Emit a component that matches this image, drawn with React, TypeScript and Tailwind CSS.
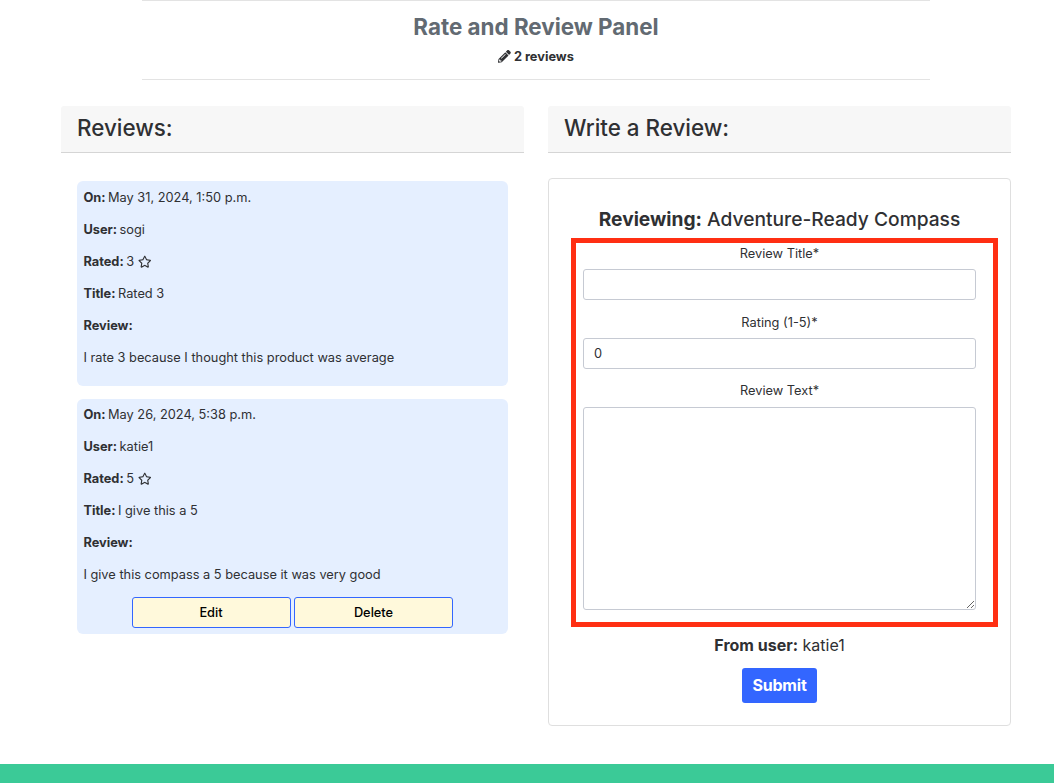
import { FaPencilAlt, FaRegStar } from "react-icons/fa";
import type { ReactNode } from "react";

type Review = {
  on: string;
  user: string;
  rated: number;
  title: string;
  text: string;
  own: boolean;
};

const reviews: Review[] = [
  {
    on: "May 31, 2024, 1:50 p.m.",
    user: "sogi",
    rated: 3,
    title: "Rated 3",
    text: "I rate 3 because I thought this product was average",
    own: false,
  },
  {
    on: "May 26, 2024, 5:38 p.m.",
    user: "katie1",
    rated: 5,
    title: "I give this a 5",
    text: "I give this compass a 5 because it was very good",
    own: true,
  },
];

function PanelHeader({ children }: { children: ReactNode }) {
  return (
    <h3 className="h-[47px] rounded-t-[3px] border-b border-[#d5d5d5] bg-[#f7f7f7] px-4 text-[22.4px] leading-[43px] font-medium">
      {children}
    </h3>
  );
}

function Row({ label, children }: { label: string; children?: ReactNode }) {
  return (
    <p className="flex h-8 items-start gap-[2.5px] leading-[19px]">
      <strong className="font-bold">{label}</strong>
      {children}
    </p>
  );
}

function ReviewCard({ review }: { review: Review }) {
  return (
    <article
      className={
        review.own
          ? "h-[235px] rounded-md bg-[#e5efff] px-[6.4px] pt-1.5"
          : "h-[205px] rounded-md bg-[#e5efff] px-[6.4px] pt-[7px]"
      }
    >
      <Row label="On:">{review.on}</Row>
      <Row label="User:">{review.user}</Row>
      <Row label="Rated:">
        {review.rated} <FaRegStar className="mt-[2.5px] ml-[1.5px] text-[13.5px]" />
      </Row>
      <Row label="Title:">{review.title}</Row>
      <Row label="Review:" />
      <p className="h-8 leading-[19px]">{review.text}</p>
      {review.own && (
        <div className="flex justify-center gap-[3px] text-black">
          <button className="h-[31px] w-[159px] rounded-[3px] border border-[#3366ff] bg-[#fff9db] pr-px font-medium">
            Edit
          </button>
          <button className="h-[31px] w-[159px] rounded-[3px] border border-[#3366ff] bg-[#fff9db] font-medium">
            Delete
          </button>
        </div>
      )}
    </article>
  );
}

export default function App() {
  return (
    <div className="flex h-[783px] flex-col overflow-hidden bg-white font-['Inter',sans-serif] text-[12.8px] text-[#2f3033]">
      <header className="ml-[142px] h-20 w-[788px] border-y border-[#e3e3e3] text-center">
        <h2 className="mt-[10px] text-[22.4px] leading-8 font-bold text-[#626a72]">Rate and Review Panel</h2>
        <p className="mt-1 flex items-center justify-center gap-[3px] leading-5 font-bold">
          <FaPencilAlt className="-mt-px text-[12.8px]" /> 2 reviews
        </p>
      </header>

      <main className="mt-[26px] ml-[61px] grid w-[950px] grid-cols-2 gap-6">
        <section>
          <PanelHeader>Reviews:</PanelHeader>
          <div className="mt-7 flex flex-col gap-[13px] px-4">
            {reviews.map((review) => (
              <ReviewCard key={review.user} review={review} />
            ))}
          </div>
        </section>

        <section>
          <PanelHeader>Write a Review:</PanelHeader>
          <form className="mt-[25px] flex h-[548px] flex-col items-center rounded border border-[#dfdfdf]">
            <h4 className="mt-[26px] text-[19.2px] leading-7 font-medium">
              <strong className="font-bold">Reviewing:</strong> Adventure-Ready Compass
            </h4>
            <div className="mt-[5px] ml-[22px] flex h-[389px] w-[427px] flex-col self-start border-[5px] border-[#ff2f13] pr-[17px] pl-[7px]">
              <label className="mt-px text-center leading-[19px]">Review Title*</label>
              <input className="mt-[6px] h-[31px] w-full shrink-0 rounded-[3px] border border-[#c6cad3] px-[10px]" />
              <label className="mt-[13px] text-center leading-[19px]">Rating (1-5)*</label>
              <input
                className="mt-[6px] h-[31px] w-full shrink-0 rounded-[3px] border border-[#c6cad3] px-[10px] text-[#2f3033]"
                defaultValue="0"
              />
              <label className="mt-3 text-center leading-[19px]">Review Text*</label>
              <textarea className="mt-[7px] h-[203px] w-full shrink-0 resize rounded-[3px] border border-[#c6cad3]" />
            </div>
            <p className="mt-[6px] text-base leading-6">
              <strong className="font-bold">From user:</strong> katie1
            </p>
            <button className="mt-[11px] h-[35px] w-[75px] rounded-[3px] bg-[#3366ff] pb-[2px] text-base font-bold tracking-[-0.2px] text-white">
              Submit
            </button>
          </form>
        </section>
      </main>

      <footer className="mt-auto h-[19px] shrink-0 bg-[#3bca97]" />
    </div>
  );
}
